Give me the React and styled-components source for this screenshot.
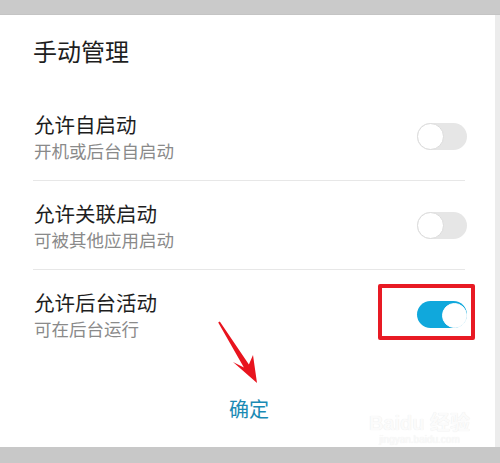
import React from 'react';
import styled, { createGlobalStyle } from 'styled-components';

const GlobalStyle = createGlobalStyle`
  html, body {
    margin: 0;
    padding: 0;
    background: #c9c9c9;
  }
  body {
    font-family: "Noto Sans CJK SC", "Noto Sans", sans-serif;
  }
`;

const Page = styled.div`
  width: 500px;
  height: 463px;
  display: flex;
  flex-direction: column;
  overflow: hidden;
`;

const TopBand = styled.div`
  height: 15px;
  background: #cacaca;
  box-sizing: border-box;
  border-bottom: 1px solid #c4c4c4;
`;

const Middle = styled.div`
  flex: 1;
  display: flex;
`;

const Card = styled.div`
  position: relative;
  flex: 1;
  background: #fff;
  display: flex;
  flex-direction: column;
`;

const RightStrip = styled.div`
  width: 5px;
  background: #ececec;
`;

const BottomBand = styled.div`
  height: 16px;
  background: #c8c8c8;
`;

const Heading = styled.h1`
  margin: 0;
  padding: 20px 0 0 33px;
  height: 77px;
  box-sizing: border-box;
  font-size: 24px;
  line-height: 32px;
  font-weight: 400;
  color: #1e1e1e;
`;

const List = styled.div`
  padding: 0 30px 0 33px;
`;

const Row = styled.div`
  height: 89px;
  box-sizing: border-box;
  display: flex;
  align-items: center;
  justify-content: space-between;
  border-bottom: ${(p) => (p.last ? 'none' : '1px solid #e7e7e7')};
`;

const Texts = styled.div`
  display: flex;
  flex-direction: column;
  gap: 3px;
  padding-left: 1px;
`;

const Title = styled.div`
  font-size: 20.5px;
  line-height: 26px;
  color: #1e1e1e;
`;

const Sub = styled.div`
  font-size: 17.5px;
  line-height: 22px;
  color: #8a8a8a;
`;

const SwitchWrap = styled.div`
  position: relative;
  margin-right: -2px;
`;

const Track = styled.div`
  width: 50px;
  height: 27px;
  border-radius: 14px;
  background: ${(p) => (p.on ? '#10a8dc' : '#e6e6e6')};
  position: relative;
`;

const Knob = styled.div`
  position: absolute;
  top: ${(p) => (p.on ? '2px' : '0')};
  left: ${(p) => (p.on ? '25px' : '0')};
  width: ${(p) => (p.on ? '23px' : '25px')};
  height: ${(p) => (p.on ? '23px' : '25px')};
  border-radius: 50%;
  background: #fff;
  border: 1px solid ${(p) => (p.on ? '#fff' : '#dcdcdc')};
`;

const Highlight = styled.div`
  position: absolute;
  left: -39px;
  top: -17px;
  width: 97px;
  height: 56px;
  box-sizing: border-box;
  border: 4px solid #e81a24;
  border-radius: 2px;
`;

const Confirm = styled.div`
  flex: 1;
  display: flex;
  justify-content: center;
  padding-top: 37px;
  box-sizing: border-box;
  font-size: 20px;
  line-height: 26px;
  color: #1a8ab4;
  margin-right: -3px;
`;

const Arrow = styled.svg`
  position: absolute;
  left: 210px;
  top: 300px;
  width: 55px;
  height: 75px;
`;

const Watermark = styled.div`
  position: absolute;
  right: 25px;
  bottom: 2px;
  display: flex;
  flex-direction: column;
  align-items: center;
  color: #fbfbfb;
  text-shadow: 0 0 1px #e6e6e6;
  font-family: "Liberation Sans", "Noto Sans CJK SC", sans-serif;
  line-height: 1;
`;

const MarkTop = styled.div`
  font-size: 20px;
  font-weight: 700;
`;

const MarkUrl = styled.div`
  font-size: 10px;
  margin-top: 2px;
`;

const Toggle = ({ on, marked }) => (
  <SwitchWrap>
    <Track on={on}>
      <Knob on={on} />
    </Track>
    {marked && <Highlight />}
  </SwitchWrap>
);

const items = [
  { title: '允许自启动', sub: '开机或后台自启动', on: false },
  { title: '允许关联启动', sub: '可被其他应用启动', on: false },
  { title: '允许后台活动', sub: '可在后台运行', on: true, marked: true },
];

const App = () => {
  return (
    <Page>
      <GlobalStyle />
      <TopBand />
      <Middle>
        <Card>
          <Heading>手动管理</Heading>
          <List>
            {items.map((it, i) => (
              <Row key={it.title} last={i === items.length - 1}>
                <Texts>
                  <Title>{it.title}</Title>
                  <Sub>{it.sub}</Sub>
                </Texts>
                <Toggle on={it.on} marked={it.marked} />
              </Row>
            ))}
          </List>
          <Confirm>确定</Confirm>
          <Arrow viewBox="0 0 55 75">
            <path
              d="M9.8 6.5 L38.9 49.4 L43 40 L47 68 L23 47 L33.9 52.6 L8.2 7.5 Z"
              fill="#e8141e"
            />
          </Arrow>
          <Watermark>
            <MarkTop>Baidu 经验</MarkTop>
            <MarkUrl>jingyan.baidu.com</MarkUrl>
          </Watermark>
        </Card>
        <RightStrip />
      </Middle>
      <BottomBand />
    </Page>
  );
};

export default App;
